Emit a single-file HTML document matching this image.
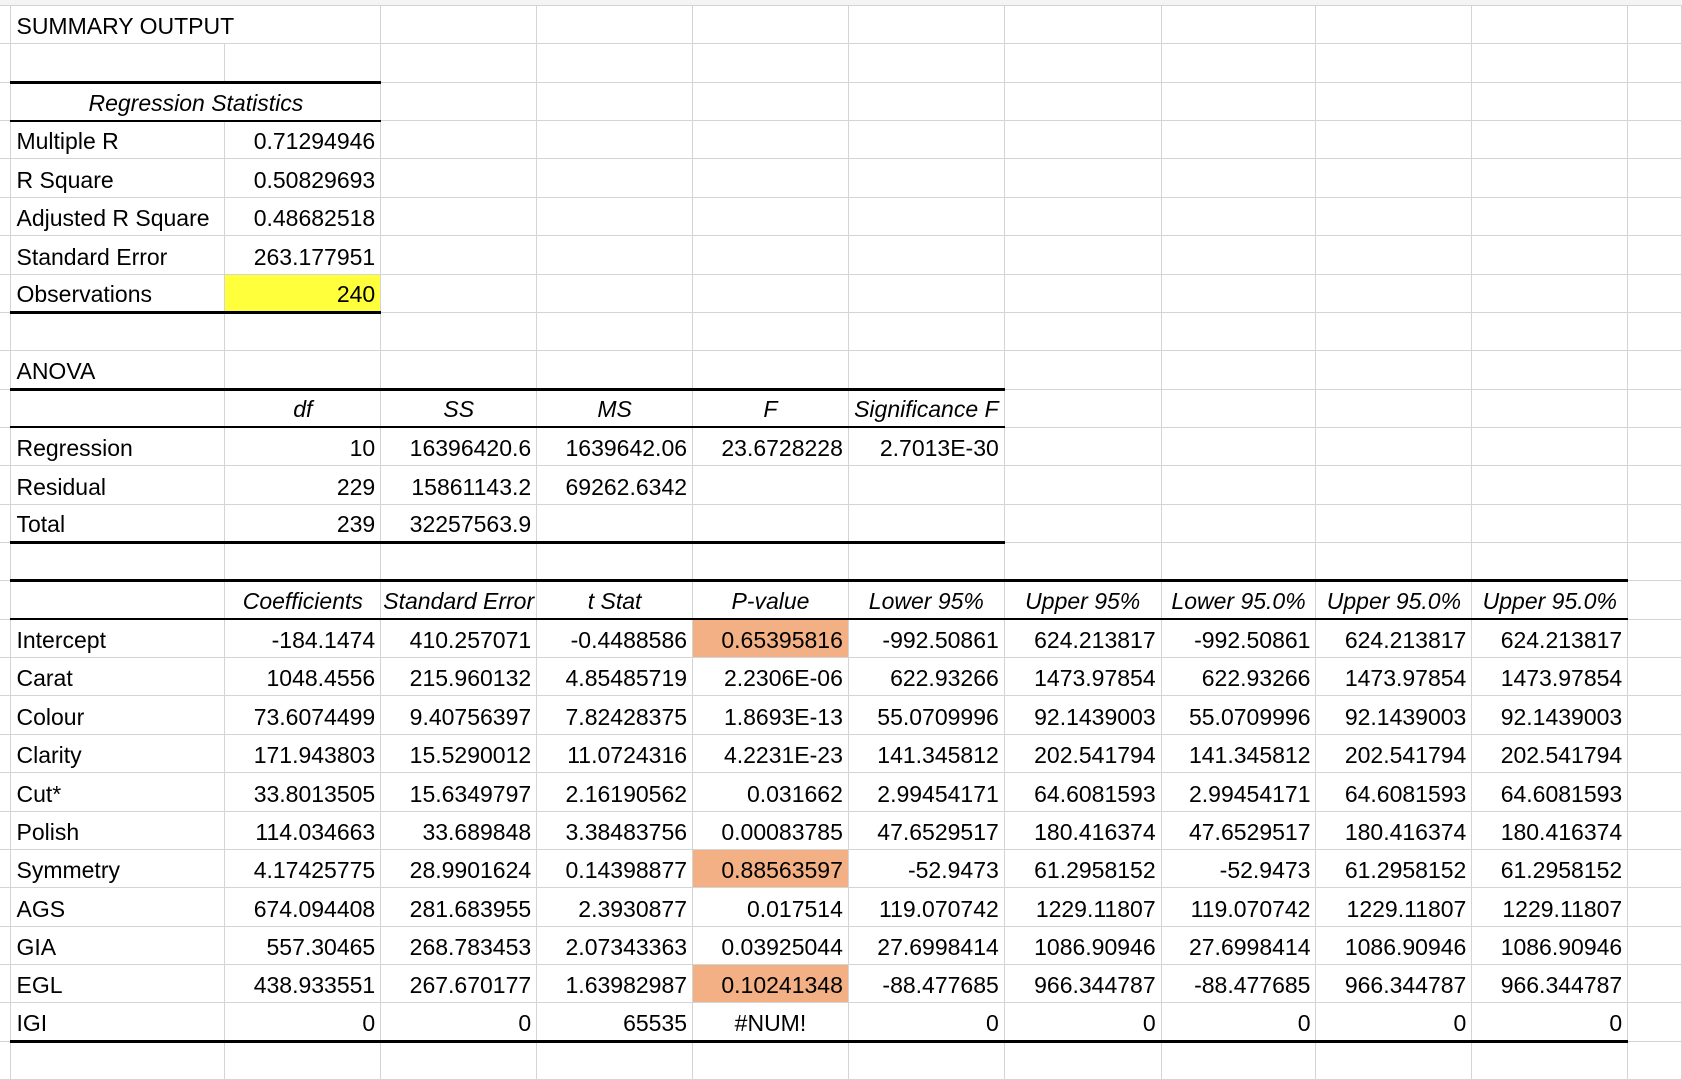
<!DOCTYPE html>
<html><head><meta charset="utf-8"><style>
html,body{margin:0;padding:0;background:#fff;width:1682px;height:1080px;overflow:hidden}
.top{position:absolute;left:0;top:0;width:1682px;height:5px;background:#f4f4f4;border-bottom:1px solid #b8b8b8}
table{position:absolute;left:0;top:5px;border-collapse:collapse;table-layout:fixed;font-family:"Liberation Sans",sans-serif;font-size:23px;color:#000}
tr{height:38.36px}
td{border:1px solid #d4d4d4;padding:0 5px 5px 5px;vertical-align:bottom;white-space:nowrap;overflow:hidden;line-height:24px}
td.z{border-left:none}
.r{text-align:right}
.c{text-align:center;font-style:italic}
.t{border-bottom:3px solid #000}
.b{border-bottom:2px solid #000}
.y{background:#ffff3b}
.o{background:#f2b084}
.n{padding-left:0!important;padding-right:0!important}
</style></head><body>
<div class="top"></div>
<table>
<colgroup><col style="width:11px"><col style="width:214px"><col style="width:156px"><col style="width:156px"><col style="width:156px"><col style="width:156px"><col style="width:156px"><col style="width:157px"><col style="width:155px"><col style="width:156px"><col style="width:156px"><col style="width:54px"></colgroup>
<tr><td class="z"></td><td colspan="2">SUMMARY OUTPUT</td><td></td><td></td><td></td><td></td><td></td><td></td><td></td><td></td><td></td></tr>
<tr><td class="z"></td><td class="t"></td><td class="t"></td><td></td><td></td><td></td><td></td><td></td><td></td><td></td><td></td><td></td></tr>
<tr><td class="z"></td><td colspan="2" class="c b">Regression Statistics</td><td></td><td></td><td></td><td></td><td></td><td></td><td></td><td></td><td></td></tr>
<tr><td class="z"></td><td>Multiple R</td><td class="r">0.71294946</td><td></td><td></td><td></td><td></td><td></td><td></td><td></td><td></td><td></td></tr>
<tr><td class="z"></td><td>R Square</td><td class="r">0.50829693</td><td></td><td></td><td></td><td></td><td></td><td></td><td></td><td></td><td></td></tr>
<tr><td class="z"></td><td class="n" style="padding-left:5px!important">Adjusted R Square</td><td class="r">0.48682518</td><td></td><td></td><td></td><td></td><td></td><td></td><td></td><td></td><td></td></tr>
<tr><td class="z"></td><td>Standard Error</td><td class="r">263.177951</td><td></td><td></td><td></td><td></td><td></td><td></td><td></td><td></td><td></td></tr>
<tr><td class="z"></td><td class="t">Observations</td><td class="r t y">240</td><td></td><td></td><td></td><td></td><td></td><td></td><td></td><td></td><td></td></tr>
<tr><td class="z"></td><td></td><td></td><td></td><td></td><td></td><td></td><td></td><td></td><td></td><td></td><td></td></tr>
<tr><td class="z"></td><td class="t">ANOVA</td><td class="t"></td><td class="t"></td><td class="t"></td><td class="t"></td><td class="t"></td><td></td><td></td><td></td><td></td><td></td></tr>
<tr><td class="z"></td><td class="b"></td><td class="c b">df</td><td class="c b">SS</td><td class="c b">MS</td><td class="c b">F</td><td class="c b n">Significance F</td><td></td><td></td><td></td><td></td><td></td></tr>
<tr><td class="z"></td><td>Regression</td><td class="r">10</td><td class="r">16396420.6</td><td class="r">1639642.06</td><td class="r">23.6728228</td><td class="r">2.7013E-30</td><td></td><td></td><td></td><td></td><td></td></tr>
<tr><td class="z"></td><td>Residual</td><td class="r">229</td><td class="r">15861143.2</td><td class="r">69262.6342</td><td></td><td></td><td></td><td></td><td></td><td></td><td></td></tr>
<tr><td class="z"></td><td class="t">Total</td><td class="r t">239</td><td class="r t">32257563.9</td><td class="t"></td><td class="t"></td><td class="t"></td><td></td><td></td><td></td><td></td><td></td></tr>
<tr><td class="z"></td><td class="t"></td><td class="t"></td><td class="t"></td><td class="t"></td><td class="t"></td><td class="t"></td><td class="t"></td><td class="t"></td><td class="t"></td><td class="t"></td><td></td></tr>
<tr><td class="z"></td><td class="b"></td><td class="c b n">Coefficients</td><td class="c b n" style="text-overflow:clip">Standard Error</td><td class="c b">t Stat</td><td class="c b">P-value</td><td class="c b n">Lower 95%</td><td class="c b n">Upper 95%</td><td class="c b n">Lower 95.0%</td><td class="c b n">Upper 95.0%</td><td class="c b n">Upper 95.0%</td><td></td></tr>
<tr><td class="z"></td><td>Intercept</td><td class="r">-184.1474</td><td class="r">410.257071</td><td class="r">-0.4488586</td><td class="r o">0.65395816</td><td class="r">-992.50861</td><td class="r">624.213817</td><td class="r">-992.50861</td><td class="r">624.213817</td><td class="r">624.213817</td><td></td></tr>
<tr><td class="z"></td><td>Carat</td><td class="r">1048.4556</td><td class="r">215.960132</td><td class="r">4.85485719</td><td class="r">2.2306E-06</td><td class="r">622.93266</td><td class="r">1473.97854</td><td class="r">622.93266</td><td class="r">1473.97854</td><td class="r">1473.97854</td><td></td></tr>
<tr><td class="z"></td><td>Colour</td><td class="r">73.6074499</td><td class="r">9.40756397</td><td class="r">7.82428375</td><td class="r">1.8693E-13</td><td class="r">55.0709996</td><td class="r">92.1439003</td><td class="r">55.0709996</td><td class="r">92.1439003</td><td class="r">92.1439003</td><td></td></tr>
<tr><td class="z"></td><td>Clarity</td><td class="r">171.943803</td><td class="r">15.5290012</td><td class="r">11.0724316</td><td class="r">4.2231E-23</td><td class="r">141.345812</td><td class="r">202.541794</td><td class="r">141.345812</td><td class="r">202.541794</td><td class="r">202.541794</td><td></td></tr>
<tr><td class="z"></td><td>Cut*</td><td class="r">33.8013505</td><td class="r">15.6349797</td><td class="r">2.16190562</td><td class="r">0.031662</td><td class="r">2.99454171</td><td class="r">64.6081593</td><td class="r">2.99454171</td><td class="r">64.6081593</td><td class="r">64.6081593</td><td></td></tr>
<tr><td class="z"></td><td>Polish</td><td class="r">114.034663</td><td class="r">33.689848</td><td class="r">3.38483756</td><td class="r">0.00083785</td><td class="r">47.6529517</td><td class="r">180.416374</td><td class="r">47.6529517</td><td class="r">180.416374</td><td class="r">180.416374</td><td></td></tr>
<tr><td class="z"></td><td>Symmetry</td><td class="r">4.17425775</td><td class="r">28.9901624</td><td class="r">0.14398877</td><td class="r o">0.88563597</td><td class="r">-52.9473</td><td class="r">61.2958152</td><td class="r">-52.9473</td><td class="r">61.2958152</td><td class="r">61.2958152</td><td></td></tr>
<tr><td class="z"></td><td>AGS</td><td class="r">674.094408</td><td class="r">281.683955</td><td class="r">2.3930877</td><td class="r">0.017514</td><td class="r">119.070742</td><td class="r">1229.11807</td><td class="r">119.070742</td><td class="r">1229.11807</td><td class="r">1229.11807</td><td></td></tr>
<tr><td class="z"></td><td>GIA</td><td class="r">557.30465</td><td class="r">268.783453</td><td class="r">2.07343363</td><td class="r">0.03925044</td><td class="r">27.6998414</td><td class="r">1086.90946</td><td class="r">27.6998414</td><td class="r">1086.90946</td><td class="r">1086.90946</td><td></td></tr>
<tr><td class="z"></td><td>EGL</td><td class="r">438.933551</td><td class="r">267.670177</td><td class="r">1.63982987</td><td class="r o">0.10241348</td><td class="r">-88.477685</td><td class="r">966.344787</td><td class="r">-88.477685</td><td class="r">966.344787</td><td class="r">966.344787</td><td></td></tr>
<tr><td class="z"></td><td class="t">IGI</td><td class="r t">0</td><td class="r t">0</td><td class="r t">65535</td><td class="c t" style="font-style:normal">#NUM!</td><td class="r t">0</td><td class="r t">0</td><td class="r t">0</td><td class="r t">0</td><td class="r t">0</td><td></td></tr>
<tr><td class="z"></td><td></td><td></td><td></td><td></td><td></td><td></td><td></td><td></td><td></td><td></td><td></td></tr>
</table>
</body></html>
